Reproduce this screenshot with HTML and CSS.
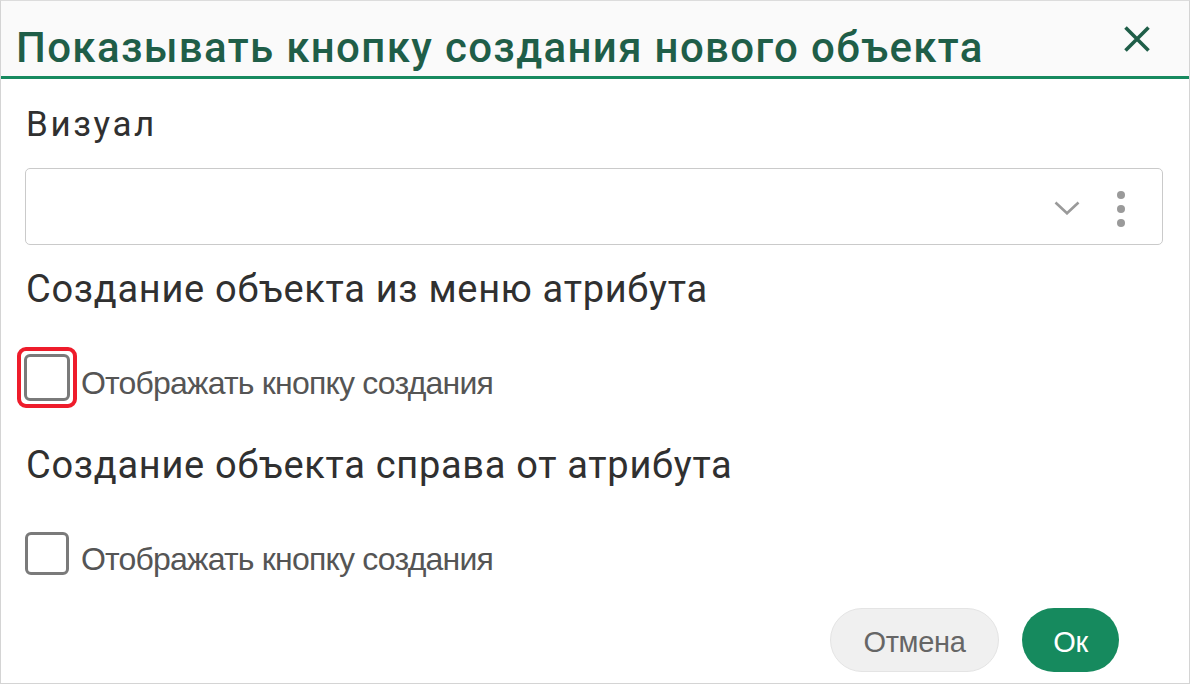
FILE: index.html
```html
<!DOCTYPE html>
<html lang="ru">
<head>
<meta charset="utf-8">
<link rel="stylesheet" href="styles.css">
</head>
<body>
<div class="dialog">
  <header class="dlg-header">
    <h1 class="dlg-title">Показывать кнопку создания нового объекта</h1>
    <button class="close" aria-label="Закрыть">
      <svg width="28" height="28" viewBox="0 0 28 28"><path d="M2.5 2.5L25.5 25.5M25.5 2.5L2.5 25.5" stroke="#1f5e48" stroke-width="3.6" fill="none"/></svg>
    </button>
  </header>
  <div class="dlg-body">
    <div class="field-label">Визуал</div>
    <div class="select">
      <span class="chev"><svg width="26" height="14" viewBox="0 0 26 14"><path d="M1.5 1.5L13 12.3L24.5 1.5" stroke="#9a9a9a" stroke-width="2.6" fill="none"/></svg></span>
      <span class="kebab"><i></i><i></i><i></i></span>
    </div>
    <div class="section-title first">Создание объекта из меню атрибута</div>
    <label class="check-row">
      <span class="focus-ring"><span class="box"></span></span>
      <span class="check-text">Отображать кнопку создания</span>
    </label>
    <div class="section-title second">Создание объекта справа от атрибута</div>
    <label class="check-row plain">
      <span class="box"></span>
      <span class="check-text">Отображать кнопку создания</span>
    </label>
    <div class="actions">
      <button class="btn cancel">Отмена</button>
      <button class="btn ok">Ок</button>
    </div>
  </div>
</div>
</body>
</html>
```
FILE: styles.css
```css
* { box-sizing: border-box; }
html, body { margin: 0; padding: 0; background: #ffffff; }
body { font-family: Roboto, "Noto Sans", sans-serif; }
.dialog {
  width: 1190px; height: 684px;
  border: 1px solid #d4d4d4;
  border-top-color: #dcdcdc;
  background: #fff;
  display: flex; flex-direction: column;
}
.dlg-header {
  height: 78px;
  background: #fafafa;
  border-bottom: 3px solid #178a5f;
  display: flex; align-items: flex-start; justify-content: space-between;
  padding: 0 38px 0 15px;
}
.dlg-title {
  margin: 0; padding-top: 22px;
  font-size: 42px; line-height: 50px; font-weight: 500;
  color: #1f5e48;
  letter-spacing: 1.35px;
}
.close { border: 0; background: none; padding: 0; margin-top: 24px; display: flex; }
.dlg-body { padding: 26px 26px 0 24px; display: flex; flex-direction: column; flex: 1; }
.field-label { font-size: 35px; line-height: 40px; color: #303030; padding-left: 1px; letter-spacing: 2.6px; }
.select {
  margin-top: 23px;
  height: 77px;
  border: 1px solid #cacaca; border-radius: 5px;
  display: flex; align-items: center; justify-content: flex-end;
  padding-right: 37px;
}
.chev { display: flex; margin-right: 37px; margin-top: 2px; }
.kebab { display: flex; flex-direction: column; gap: 6px; margin-top: 4px; }
.kebab i { width: 8px; height: 8px; border-radius: 50%; background: #9a9a9a; display: block; }
.section-title { font-size: 38px; line-height: 44px; color: #303030; padding-left: 1px; letter-spacing: 0.7px; }
.section-title.first { margin-top: 22px; }
.section-title.second { margin-top: 35px; }
.check-row { display: flex; align-items: center; margin-top: 36px; min-height: 61px; }
.focus-ring {
  margin-left: -8px;
  width: 60px; height: 61px;
  border: 4px solid #ee1c2b; border-radius: 9px;
  display: flex; align-items: center; justify-content: center;
}
.box {
  width: 44px; height: 43px;
  border: 3px solid #7a7a7a; border-radius: 6px;
  background: #fff; display: block; flex: none;
}
.focus-ring .box { width: 46px; height: 47px; }
.check-text {
  font-family: "Liberation Sans", Arial, sans-serif;
  font-size: 32px; line-height: 36px; color: #555;
  letter-spacing: -0.8px;
  margin-left: 4px; padding-top: 10px;
}
.check-row.plain .check-text { margin-left: 12px; }
.actions { margin-top: auto; margin-bottom: 11px; display: flex; justify-content: flex-end; gap: 23px; padding-right: 44px; }
.btn {
  height: 64px; border-radius: 32px;
  font-family: "Liberation Sans", Arial, sans-serif;
  font-size: 29px; letter-spacing: -0.3px; padding: 4px 0 0;
  border: 1px solid transparent;
}
.cancel { width: 169px; background: #f0f0f0; border-color: #e4e4e4; color: #666; }
.ok { width: 97px; background: #168a5e; color: #fff; }
```
